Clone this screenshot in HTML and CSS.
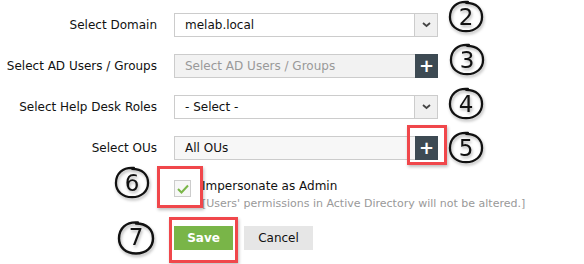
FILE: index.html
```html
<!DOCTYPE html>
<html lang="en">
  <head>
    <meta charset="UTF-8" />
    <title>Help Desk Technician</title>
    <link rel="stylesheet" href="styles.css">
  </head>
  <body>
    <form class="tech-form">
      <div class="row">
        <label class="label">Select Domain</label>
        <div class="select">
          <span class="value">melab.local</span>
          <span class="arrow"><svg width="9" height="6" viewBox="0 0 9 6"><path d="M1 1l3.5 3L8 1" fill="none" stroke="#444" stroke-width="1.8"/></svg></span>
        </div>
      </div>
      <div class="row">
        <label class="label">Select AD Users / Groups</label>
        <div class="picker">
          <span class="value placeholder">Select AD Users / Groups</span>
          <span class="add">+</span>
        </div>
      </div>
      <div class="row">
        <label class="label">Select Help Desk Roles</label>
        <div class="select">
          <span class="value">- Select -</span>
          <span class="arrow"><svg width="9" height="6" viewBox="0 0 9 6"><path d="M1 1l3.5 3L8 1" fill="none" stroke="#444" stroke-width="1.8"/></svg></span>
        </div>
      </div>
      <div class="row">
        <label class="label">Select OUs</label>
        <div class="picker ous">
          <span class="value">All OUs</span>
          <span class="add">+</span>
        </div>
      </div>

      <div class="check-row">
        <span class="checkbox"><svg width="12" height="10" viewBox="0 0 12 10"><path d="M1 5l3.5 3.5L11 1.5" fill="none" stroke="#7ab648" stroke-width="2"/></svg></span>
        <div class="check-text">
          <div>Impersonate as Admin</div>
          <div class="hint">[Users' permissions in Active Directory will not be altered.]</div>
        </div>
      </div>

      <div class="actions">
        <button type="button" class="btn save">Save</button>
        <button type="button" class="btn cancel">Cancel</button>
      </div>
    </form>

    <!-- annotations drawn over the form -->
    <div class="hl hl-plus"></div>
    <div class="hl hl-check"></div>
    <div class="hl hl-save"></div>

    <div class="mark m2"><svg viewBox="0 0 40 36"><path d="M22 2C10 1 3 8 3 18c0 9 7 15 17 15 10 0 17-6 17-15C37 9 31 3 20 3"/></svg><span>2</span></div>
    <div class="mark m3"><svg viewBox="0 0 40 36"><path d="M22 2C10 1 3 8 3 18c0 9 7 15 17 15 10 0 17-6 17-15C37 9 31 3 20 3"/></svg><span>3</span></div>
    <div class="mark m4"><svg viewBox="0 0 40 36"><path d="M22 2C10 1 3 8 3 18c0 9 7 15 17 15 10 0 17-6 17-15C37 9 31 3 20 3"/></svg><span>4</span></div>
    <div class="mark m5"><svg viewBox="0 0 40 36"><path d="M22 2C10 1 3 8 3 18c0 9 7 15 17 15 10 0 17-6 17-15C37 9 31 3 20 3"/></svg><span>5</span></div>
    <div class="mark m6"><svg viewBox="0 0 40 36"><path d="M22 2C10 1 3 8 3 18c0 9 7 15 17 15 10 0 17-6 17-15C37 9 31 3 20 3"/></svg><span>6</span></div>
    <div class="mark m7"><svg viewBox="0 0 40 36"><path d="M22 2C10 1 3 8 3 18c0 9 7 15 17 15 10 0 17-6 17-15C37 9 31 3 20 3"/></svg><span>7</span></div>
  </body>
</html>
```

FILE: styles.css
```css
body {
  margin: 0;
  background: #fff;
  font-family: "DejaVu Sans", Verdana, sans-serif;
  font-size: 12px;
  color: #111;
  position: relative;
  width: 584px;
  height: 264px;
  overflow: hidden;
}
.tech-form {
  padding-top: 13px;
}
.row {
  display: flex;
  align-items: center;
  height: 24px;
  margin-bottom: 17px;
}
.label {
  width: 157px;
  text-align: right;
  margin-right: 17px;
}
.select,
.picker {
  display: flex;
  width: 264px;
  height: 24px;
  box-sizing: border-box;
  border: 1px solid #ccc;
  background: #fff;
}
.value {
  flex: 1;
  padding-left: 10px;
  line-height: 22px;
}
.placeholder {
  color: #999;
}
.picker {
  background: #f2f2f2;
  border-right: 0;
}
.picker.ous {
  background: #f7f7f7;
}
.arrow {
  width: 22px;
  border-left: 1px solid #ccc;
  background: #f0f0f0;
  display: flex;
  align-items: center;
  justify-content: center;
}
.add {
  width: 23px;
  margin: -1px 0;
  background: #3d4a53;
  color: #fff;
  font-size: 18px;
  font-weight: bold;
  line-height: 24px;
  text-align: center;
}
.check-row {
  display: flex;
  margin-top: 1px;
  padding-left: 174px;
}
.checkbox {
  width: 17px;
  height: 17px;
  box-sizing: border-box;
  border: 1px solid #ccc;
  background: #f7f7f7;
  display: flex;
  align-items: center;
  justify-content: center;
  margin-top: 3px;
  margin-right: 11px;
}
.check-text {
  line-height: 18px;
}
.hint {
  color: #999;
  font-size: 11px;
}
.actions {
  display: flex;
  gap: 11px;
  padding-left: 174px;
  margin-top: 13px;
}
.btn {
  height: 24px;
  border: 0;
  padding: 0;
  font-family: inherit;
  font-size: 12px;
}
.save {
  width: 59px;
  background: #79b548;
  color: #fff;
  font-weight: bold;
}
.cancel {
  width: 69px;
  background: #e6e6e6;
  color: #111;
}

.hl {
  position: absolute;
  box-sizing: border-box;
  border: 3px solid #f0474b;
  box-shadow: 1px 2px 3px rgba(0, 0, 0, 0.25);
}
.hl-plus { left: 407px; top: 125px; width: 40px; height: 40px; }
.hl-check { left: 157px; top: 166px; width: 46px; height: 42px; }
.hl-save { left: 169px; top: 217px; width: 69px; height: 46px; }

.mark {
  position: absolute;
  width: 38px;
  height: 34px;
  filter: drop-shadow(1px 2px 1.5px rgba(0, 0, 0, 0.3));
}
.mark svg {
  position: absolute;
  inset: 0;
  width: 100%;
  height: 100%;
}
.mark path {
  fill: none;
  stroke: #111;
  stroke-width: 2.4;
  stroke-linecap: round;
}
.mark span {
  position: absolute;
  inset: 0;
  text-align: center;
  font-size: 23px;
  line-height: 34px;
  color: #111;
  font-family: "DejaVu Sans", sans-serif;
}
.m2 { left: 447px; top: 0; }
.m3 { left: 448px; top: 43px; }
.m4 { left: 447px; top: 87px; }
.m5 { left: 447px; top: 131px; }
.m6 { left: 113px; top: 166px; }
.m7 { left: 116px; top: 220px; width: 40px; height: 37px; }
```
